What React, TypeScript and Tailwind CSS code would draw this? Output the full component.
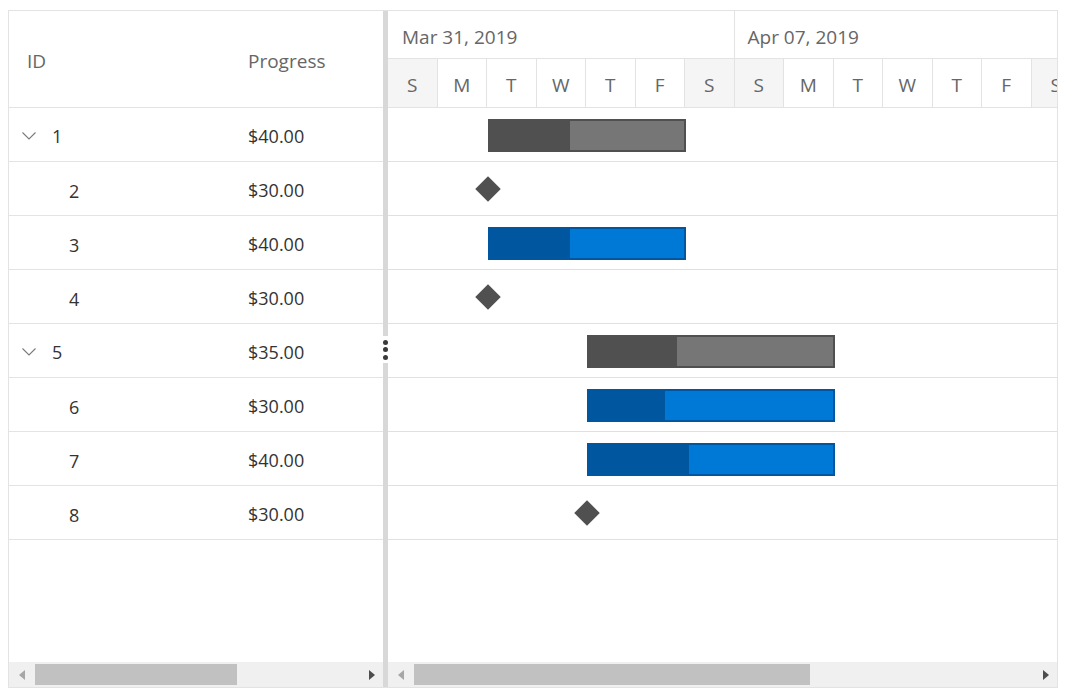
import React from 'react'

type Task = {
  id: number
  progress: string
  parent?: boolean
  kind: 'parent' | 'child' | 'milestone'
  left: number
  width: number
  pct: number
}

const tasks: Task[] = [
  { id: 1, progress: '$40.00', parent: true, kind: 'parent', left: 100, width: 198, pct: 41 },
  { id: 2, progress: '$30.00', kind: 'milestone', left: 100, width: 0, pct: 0 },
  { id: 3, progress: '$40.00', kind: 'child', left: 100, width: 198, pct: 41 },
  { id: 4, progress: '$30.00', kind: 'milestone', left: 100, width: 0, pct: 0 },
  { id: 5, progress: '$35.00', parent: true, kind: 'parent', left: 199, width: 248, pct: 36 },
  { id: 6, progress: '$30.00', kind: 'child', left: 199, width: 248, pct: 31 },
  { id: 7, progress: '$40.00', kind: 'child', left: 199, width: 248, pct: 41 },
  { id: 8, progress: '$30.00', kind: 'milestone', left: 199, width: 0, pct: 0 },
]

const days = ['S', 'M', 'T', 'W', 'T', 'F', 'S', 'S', 'M', 'T', 'W', 'T', 'F', 'S']

const font = { fontFamily: '"Open Sans", "Noto Sans", sans-serif' }

function Chevron() {
  return (
    <svg width="14" height="8" viewBox="0 0 14 8" fill="none" className="shrink-0">
      <path d="M0.5 0.5 L7 7 L13.5 0.5" stroke="#7a7a7a" strokeWidth="1.1" />
    </svg>
  )
}

function ScrollBar({ thumbLeft, thumbWidth, rightPad }: { thumbLeft: number; thumbWidth: number; rightPad: number }) {
  return (
    <div className="h-[25px] bg-[#f0f0f0] flex items-center shrink-0">
      <div className="w-0 h-0 border-y-[5px] border-y-transparent border-r-[6px] border-r-[#a6a6a6] ml-[10px]" />
      <div className="h-[21px] bg-[#c1c1c1]" style={{ marginLeft: thumbLeft, width: thumbWidth }} />
      <div className="flex-1" />
      <div className="w-0 h-0 border-y-[5px] border-y-transparent border-l-[6px] border-l-[#4d4d4d]" style={{ marginRight: rightPad }} />
    </div>
  )
}

export default function App() {
  return (
    <div className="w-[1070px] h-[699px] bg-white pt-[10px] pl-[8px]" style={font}>
      <div className="w-[1050px] h-[678px] border border-[#e3e3e3] flex">
        {/* grid side */}
        <div className="w-[374px] flex flex-col">
          <div className="h-[97px] border-b border-[#e3e3e3] flex items-center text-[19px] text-[#666666] shrink-0 pt-[4px]">
            <div className="w-[224px] pl-[18px]">ID</div>
            <div className="pl-[15px]">Progress</div>
          </div>
          {tasks.map((t) => (
            <div key={t.id} className="h-[54px] border-b border-[#e3e3e3] flex items-center text-[18px] text-[#333333] shrink-0 pt-[3px]">
              <div className="w-[224px] flex items-center">
                {t.parent ? (
                  <>
                    <div className="ml-[13px] mr-[16px] flex items-center">
                      <Chevron />
                    </div>
                    <span>{t.id}</span>
                  </>
                ) : (
                  <span className="ml-[60px] pt-[2px]">{t.id}</span>
                )}
              </div>
              <div className="pl-[15px]">{t.progress}</div>
            </div>
          ))}
          <div className="flex-1" />
          <ScrollBar thumbLeft={10} thumbWidth={202} rightPad={8} />
        </div>

        {/* splitter */}
        <div className="w-[5px] bg-[#d8d8d8] relative shrink-0">
          <div className="absolute left-[-1px] top-[325px] w-[7px] h-[27px] bg-white flex flex-col items-center justify-center gap-[2.5px]">
            <div className="w-[5px] h-[5px] rounded-full bg-[#3a3a3a]" />
            <div className="w-[5px] h-[5px] rounded-full bg-[#3a3a3a]" />
            <div className="w-[5px] h-[5px] rounded-full bg-[#3a3a3a]" />
          </div>
        </div>

        {/* chart side */}
        <div className="flex-1 flex flex-col overflow-hidden">
          <div className="shrink-0 text-[#666666]">
            <div className="h-[48px] border-b border-[#e3e3e3] flex text-[19px]">
              <div className="w-[346.5px] shrink-0 border-r border-[#e3e3e3] flex items-center pl-[14px] pt-[5px]">Mar 31, 2019</div>
              <div className="w-[346.5px] shrink-0 flex items-center pl-[13px] pt-[5px]">Apr 07, 2019</div>
            </div>
            <div className="h-[49px] border-b border-[#e3e3e3] flex text-[19px]">
              {days.map((d, i) => (
                <div
                  key={i}
                  className={
                    'w-[49.5px] shrink-0 border-r border-[#e3e3e3] flex items-center justify-center pt-[4px] ' +
                    (d === 'S' ? 'bg-[#f5f5f5]' : 'bg-white')
                  }
                >
                  {d}
                </div>
              ))}
            </div>
          </div>
          {tasks.map((t) => (
            <div key={t.id} className="h-[54px] border-b border-[#e0e0e0] relative shrink-0">
              {t.kind === 'milestone' ? (
                <div
                  className="absolute w-[18px] h-[18px] rotate-45 bg-[#505050]"
                  style={{ left: t.left - 9, top: 18 }}
                />
              ) : (
                <div
                  className={
                    'absolute top-[11px] h-[33px] border-2 ' +
                    (t.kind === 'parent' ? 'border-[#505050] bg-[#767676]' : 'border-[#01579f] bg-[#0078d6]')
                  }
                  style={{ left: t.left, width: t.width }}
                >
                  <div
                    className={'h-full ' + (t.kind === 'parent' ? 'bg-[#505050]' : 'bg-[#01579f]')}
                    style={{ width: `${t.pct}%` }}
                  />
                </div>
              )}
            </div>
          ))}
          <div className="flex-1" />
          <ScrollBar thumbLeft={10} thumbWidth={396} rightPad={8} />
        </div>
      </div>
    </div>
  )
}
